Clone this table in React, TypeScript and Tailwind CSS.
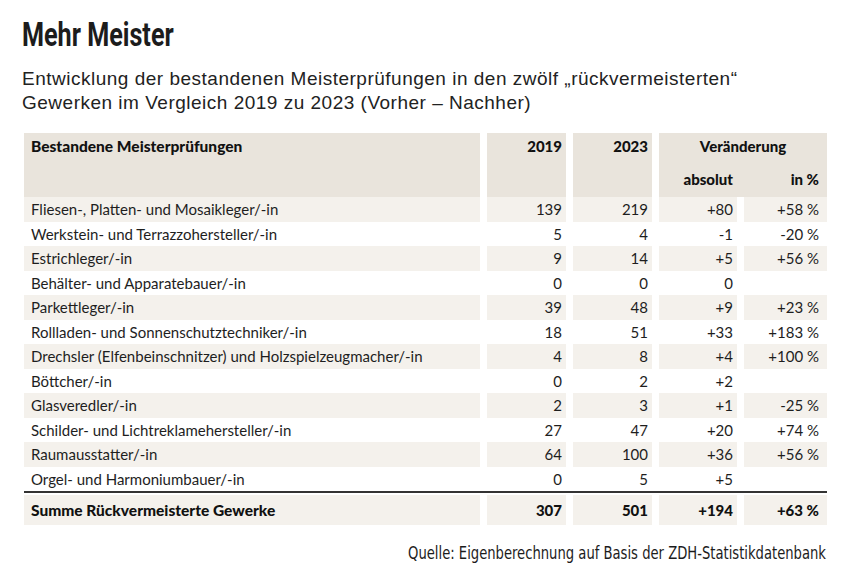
import React from "react";

type Row = { name: string; a: string; b: string; abs: string; pct: string };

const rows: Row[] = [
  { name: "Fliesen-, Platten- und Mosaikleger/-in", a: "139", b: "219", abs: "+80", pct: "+58 %" },
  { name: "Werkstein- und Terrazzohersteller/-in", a: "5", b: "4", abs: "-1", pct: "-20 %" },
  { name: "Estrichleger/-in", a: "9", b: "14", abs: "+5", pct: "+56 %" },
  { name: "Behälter- und Apparatebauer/-in", a: "0", b: "0", abs: "0", pct: "" },
  { name: "Parkettleger/-in", a: "39", b: "48", abs: "+9", pct: "+23 %" },
  { name: "Rollladen- und Sonnenschutztechniker/-in", a: "18", b: "51", abs: "+33", pct: "+183 %" },
  { name: "Drechsler (Elfenbeinschnitzer) und Holzspielzeugmacher/-in", a: "4", b: "8", abs: "+4", pct: "+100 %" },
  { name: "Böttcher/-in", a: "0", b: "2", abs: "+2", pct: "" },
  { name: "Glasveredler/-in", a: "2", b: "3", abs: "+1", pct: "-25 %" },
  { name: "Schilder- und Lichtreklamehersteller/-in", a: "27", b: "47", abs: "+20", pct: "+74 %" },
  { name: "Raumausstatter/-in", a: "64", b: "100", abs: "+36", pct: "+56 %" },
  { name: "Orgel- und Harmoniumbauer/-in", a: "0", b: "5", abs: "+5", pct: "" },
];

const cols = "grid grid-cols-[456px_79px_79px_78px_83px] gap-x-[7px]";
const tableFont = { fontFamily: "Lato, 'Open Sans', sans-serif" };

export default function App() {
  return (
    <div className="w-[851px] h-[584px] bg-white text-[#1c1c1c] overflow-hidden">
      <div className="pl-[22px] pt-[14px]">
        <h1
          className="inline-block origin-left scale-x-[0.74] text-[34px] leading-[40px] font-bold whitespace-nowrap"
          style={{ fontFamily: "Roboto, sans-serif" }}
        >
          Mehr Meister
        </h1>
        <p
          className="mt-[13px] text-[19px] leading-[23.5px] tracking-[0.5px] text-[#222]"
          style={{ fontFamily: "'Liberation Sans', Arial, sans-serif" }}
        >
          Entwicklung der bestandenen Meisterprüfungen in den zwölf „rückvermeisterten“
          <br />
          Gewerken im Vergleich 2019 zu 2023 (Vorher – Nachher)
        </p>
      </div>

      <div className="ml-[24px] mt-[19px] w-[803px] text-[15px]" style={tableFont}>
        {/* header */}
        <div className={`${cols} h-[64px] font-black text-[#111]`}>
          <div className="bg-[#e9e4dc] pl-[7px] pt-[1px] leading-[24px] text-[15.5px]">Bestandene Meisterprüfungen</div>
          <div className="bg-[#e9e4dc] pr-[4px] pt-[1px] leading-[24px] text-right">2019</div>
          <div className="bg-[#e9e4dc] pr-[4px] pt-[1px] leading-[24px] text-right">2023</div>
          <div className="col-span-2 bg-[#e9e4dc] pt-[1px] leading-[24px]">
            <div className="text-center">Veränderung</div>
            <div className="grid grid-cols-[78px_90px] mt-[9px]">
              <div className="text-right pr-[4px]">absolut</div>
              <div className="text-right pr-[8px]">in %</div>
            </div>
          </div>
        </div>

        {/* rows */}
        {rows.map((r, i) => {
          const bg = i % 2 === 0 ? "bg-[#f4f1ec]" : "bg-white";
          return (
            <div key={r.name} className={`${cols} h-[24.5px] leading-[24.5px] font-normal text-[#1e1e1e]`}>
              <div className={`${bg} pl-[7px] whitespace-nowrap`}>{r.name}</div>
              <div className={`${bg} pr-[4px] text-right`}>{r.a}</div>
              <div className={`${bg} pr-[4px] text-right`}>{r.b}</div>
              <div className={`${bg} pr-[4px] text-right`}>{r.abs}</div>
              <div className={`${bg} pr-[8px] text-right`}>{r.pct}</div>
            </div>
          );
        })}

        {/* total */}
        <div className="border-t-2 border-[#333] pt-[2px]">
          <div className={`${cols} h-[30px] leading-[30px] font-black text-[#111]`}>
            <div className="bg-[#f4f1ec] pl-[7px] text-[15.5px]">Summe Rückvermeisterte Gewerke</div>
            <div className="bg-[#f4f1ec] pr-[4px] text-right">307</div>
            <div className="bg-[#f4f1ec] pr-[4px] text-right">501</div>
            <div className="bg-[#f4f1ec] pr-[4px] text-right">+194</div>
            <div className="bg-[#f4f1ec] pr-[8px] text-right">+63 %</div>
          </div>
        </div>
      </div>

      <div className="w-[826px] mt-[17px] flex justify-end">
        <p
          className="origin-right scale-x-[0.86] whitespace-nowrap text-[17px] leading-[22px] text-[#1c1c1c]"
          style={{ fontFamily: "'Liberation Sans Narrow', 'DejaVu Sans Condensed', sans-serif" }}
        >
          Quelle: Eigenberechnung auf Basis der ZDH-Statistikdatenbank
        </p>
      </div>
    </div>
  );
}
